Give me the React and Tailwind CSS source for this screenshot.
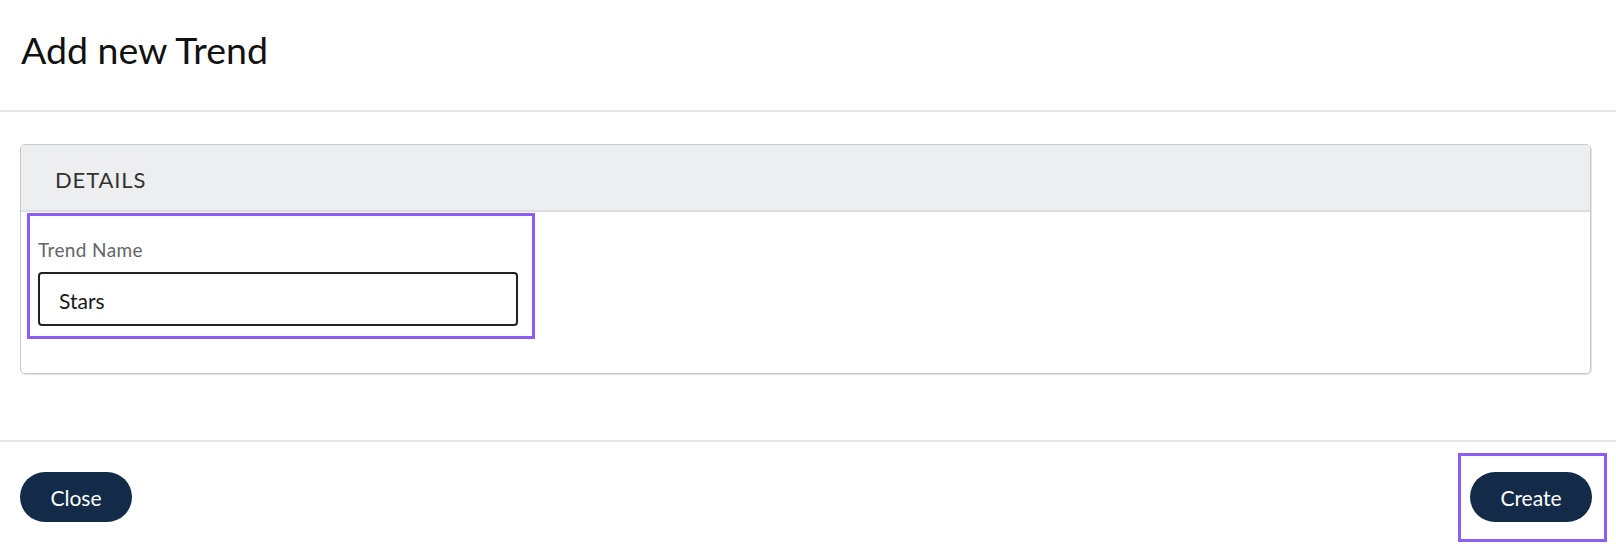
import React from "react";

export default function App() {
  const font = { fontFamily: "Lato, 'Noto Sans', sans-serif" };
  return (
    <div className="w-[1616px] h-[546px] bg-white flex flex-col overflow-hidden" style={font}>
      <header className="h-[112px] border-b-2 border-[#e4e4e4] pt-[31px] pl-[21px] shrink-0">
        <h1 className="text-[37.5px] leading-[38px] text-[#111111] font-normal">Add new Trend</h1>
      </header>

      <main className="pt-[32px] pb-[66px] pl-[20px] pr-[25px] shrink-0">
        <section className="rounded-[5px] border border-[#c5c9cc] shadow-[1px_1px_1px_rgba(0,0,0,0.12)] overflow-hidden">
          <div className="h-[67px] bg-[#edeef0] border-b-2 border-[#dcdddf] flex items-center pl-[34px] pt-[4px]">
            <h2 className="text-[22px] leading-none tracking-[0.04em] text-[#333333] uppercase">Details</h2>
          </div>
          <div className="pt-px pl-[6px] pb-[34px]">
            <div className="w-[508px] h-[126px] border-[3px] border-[#8b5cf6] pt-[24px] pl-[8px]">
              <label className="block text-[19px] leading-none tracking-[0.02em] text-[#62666a]">Trend Name</label>
              <div className="mt-[13px] w-[480px] h-[54px] border-2 border-[#1f2325] rounded-[4px] flex items-center pl-[19px] pt-[3px]">
                <span className="text-[21px] leading-none text-[#1a1a1a]">Stars</span>
              </div>
            </div>
          </div>
        </section>
      </main>

      <footer className="flex-1 border-t-2 border-[#e4e4e4] flex justify-between items-start pl-[20px] pr-[9px]">
        <button className="mt-[30px] h-[50px] w-[112px] rounded-full bg-[#132b48] text-white text-[21px] leading-none flex items-center justify-center">
          Close
        </button>
        <div className="mt-[11px] border-[3px] border-[#8b5cf6] pt-[16px] pb-[17px] pl-[9px] pr-[12px]">
          <button className="h-[50px] w-[122px] rounded-full bg-[#132b48] text-white text-[21px] leading-none flex items-center justify-center">
            Create
          </button>
        </div>
      </footer>
    </div>
  );
}
